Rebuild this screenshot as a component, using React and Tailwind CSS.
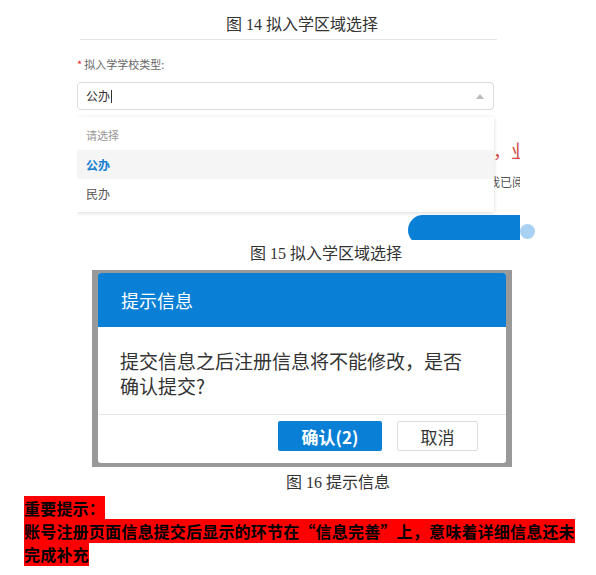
import React from 'react';

const serif = { fontFamily: '"Liberation Serif", "Noto Sans CJK SC", serif' };
const sans = { fontFamily: '"Noto Sans CJK SC", "Liberation Sans", sans-serif' };

const Caption = ({ children, offset }) => (
  <div className={`text-[16px] leading-[20px] text-[#333] ${offset}`} style={serif}>
    {children}
  </div>
);

const SchoolTypeShot = () => (
  <div className="relative ml-[77px] w-[460px]">
    <div className="relative w-[443px] h-[200px] overflow-hidden bg-white" style={sans}>
      {/* page content lying under the open menu */}
      <span className="absolute left-[416px] top-[100px] whitespace-nowrap text-[18px] leading-[20px] text-[#cf4a4a]">，业务</span>
      <span className="absolute left-[411px] top-[135px] whitespace-nowrap text-[12px] leading-[14px] text-[#555]">我已阅读</span>

      <div className="pt-[17px] text-[11px] leading-[14px] text-[#666]">
        <span className="text-[#e23] mr-[2px]">*</span>拟入学学校类型:
      </div>

      <div className="mt-[11px] w-[417px] h-[28px] border border-[#dcdcdc] rounded-[4px] flex items-center justify-between pl-[8px] pr-[9px]">
        <div className="flex items-center text-[12px] text-[#333]">
          公办<span className="ml-[1px] w-px h-[13px] bg-[#333]" />
        </div>
        <svg width="8" height="5" viewBox="0 0 8 5">
          <path d="M0 5 L4 0 L8 5 Z" fill="#bdbdbd" />
        </svg>
      </div>

      <div className="relative z-10 mt-[7px] w-[417px] bg-white py-[4px] shadow-[0_1px_4px_rgba(0,0,0,0.15)] text-[11px]">
        <div className="h-[29px] flex items-center pl-[9px] text-[#999]">请选择</div>
        <div className="h-[29px] flex items-center pl-[9px] bg-[#f5f5f5] text-[#1a7fd0] font-bold text-[12px]">公办</div>
        <div className="h-[29px] flex items-center pl-[9px] text-[#555] text-[12px]">民办</div>
      </div>

      <div className="mt-[3px] ml-[331px] w-[150px] h-[30px] rounded-full bg-[#0a7fd6]" />
    </div>
    <div className="absolute left-[443px] top-[184px] w-[15px] h-[15px] rounded-full bg-[#a9d1f3]" />
  </div>
);

const ConfirmDialogShot = () => (
  <div className="mt-[6px] ml-[92px] w-[420px] h-[197px] bg-[#999] pt-[3px] px-[6px] pb-[4px]" style={sans}>
    <div className="h-[190px] bg-white rounded-[3px] overflow-hidden flex flex-col">
      <div className="h-[54px] bg-[#0a7fd6] flex items-center pl-[23px] text-white text-[18px]">提示信息</div>
      <div className="h-[87px] pt-[21px] pl-[22px] text-[19px] leading-[25px] text-[#333]">
        提交信息之后注册信息将不能修改，是否
        <br />
        确认提交?
      </div>
      <div className="h-px bg-[#e6e6e6]" />
      <div className="flex justify-end gap-[15px] pt-[6px] pr-[28px]">
        <button className="w-[104px] h-[30px] rounded-[2px] bg-[#0a7fd6] text-white text-[17px] font-bold leading-none">确认(2)</button>
        <button className="w-[81px] h-[30px] rounded-[2px] border border-[#dcdcdc] bg-white text-[#333] text-[17px] leading-none">取消</button>
      </div>
    </div>
  </div>
);

export default function App() {
  return (
    <div className="w-[596px] h-[575px] bg-white overflow-hidden">
      <div className="pt-[15px]">
        <Caption offset="pl-[226px]">图 14 拟入学区域选择</Caption>
      </div>
      <div className="mt-[4px] ml-[80px] w-[417px] h-px bg-[#e3e3e3]" />

      <SchoolTypeShot />

      <div className="mt-[4px]">
        <Caption offset="pl-[250px]">图 15 拟入学区域选择</Caption>
      </div>

      <ConfirmDialogShot />

      <div className="mt-[6px]">
        <Caption offset="pl-[286px]">图 16 提示信息</Caption>
      </div>

      <div className="mt-[4px] ml-[24px] w-[558px] text-[16px] leading-[23px] font-bold text-black tracking-[0.2px]" style={sans}>
        <div><span className="bg-[#ff0000]">重要提示：</span></div>
        <div>
          <span className="bg-[#ff0000]">账号注册页面信息提交后显示的环节在“信息完善”上，意味着详细信息还未完成补充</span>
        </div>
      </div>
    </div>
  );
}
